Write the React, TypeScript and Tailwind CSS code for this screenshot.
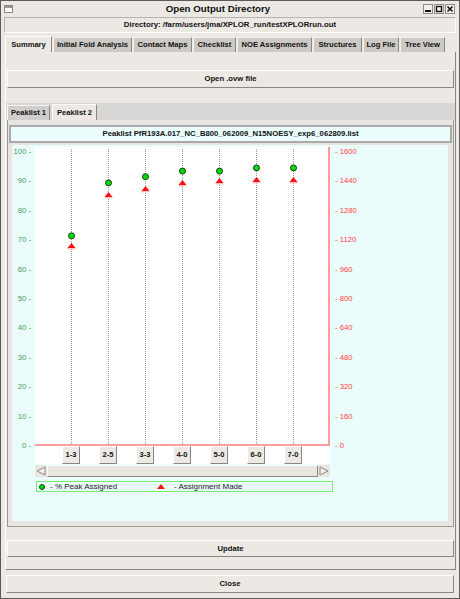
import React from "react";

// one point per peak-assignment round
const rounds = [
  { label: "1-3", pct: 71.5, made: 1088 },
  { label: "2-5", pct: 89.5, made: 1366 },
  { label: "3-3", pct: 91.6, made: 1399 },
  { label: "4-0", pct: 93.5, made: 1431 },
  { label: "5-0", pct: 93.5, made: 1442 },
  { label: "6-0", pct: 94.6, made: 1448 },
  { label: "7-0", pct: 94.6, made: 1448 },
];

const leftTicks = ["100", "90", "80", "70", "60", "50", "40", "30", "20", "10", "0"];
const rightTicks = ["1600", "1440", "1280", "1120", "960", "800", "640", "480", "320", "160", "0"];

const tabs = [
  { name: "Summary", w: "w-[47px]", active: true },
  { name: "Initial Fold Analysis", w: "w-[79px]", active: false },
  { name: "Contact Maps", w: "w-[59px]", active: false },
  { name: "Checklist", w: "w-[43px]", active: false },
  { name: "NOE Assignments", w: "w-[75px]", active: false },
  { name: "Structures", w: "w-[49px]", active: false },
  { name: "Log File", w: "w-[36px]", active: false },
  { name: "Tree View", w: "w-[45px]", active: false },
];

const raised = "border border-t-white border-l-white border-r-[#8a8781] border-b-[#8a8781]";

function Plot() {
  const W = 295;
  const H = 299;
  const step = 37;
  const x0 = 36;
  const yPct = (v: number) => 299 - v * 2.94;
  const yMade = (v: number) => 299 - (v / 1600) * 294;

  return (
    <svg width={W} height={H} className="block bg-white">
      {rounds.map((r, i) => (
        <line
          key={r.label}
          x1={x0 + i * step + 0.5}
          x2={x0 + i * step + 0.5}
          y1={2}
          y2={297}
          stroke="#9a9a9a"
          strokeWidth={1}
          strokeDasharray="1 1"
        />
      ))}
      <line x1={0} x2={W} y1={298} y2={298} stroke="#ff8080" strokeWidth={1.5} />
      <line x1={294} x2={294} y1={0} y2={H} stroke="#ff9a9a" strokeWidth={2} />
      {rounds.map((r, i) => {
        const cx = x0 + i * step + 0.5;
        const ty = yMade(r.made);
        return (
          <g key={r.label + "-m"}>
            <rect x={cx - 4} y={ty + 2} width={8} height={1.5} fill="#ffc0c0" />
            <polygon points={`${cx},${ty - 3} ${cx + 4},${ty + 2} ${cx - 4},${ty + 2}`} fill="#ff1010" />
            <circle cx={cx} cy={yPct(r.pct)} r={3} fill="#00dd00" stroke="#203820" strokeWidth={1} />
          </g>
        );
      })}
    </svg>
  );
}

function ScrollArrow({ dir }: { dir: "left" | "right" }) {
  return (
    <div className="w-[12px] h-[12px] flex items-center justify-center bg-[#e9e6e0]">
      <svg width="10" height="10">
        {dir === "left" ? (
          <polygon points="9,1 9,9 1,5" fill="#f4f2ee" stroke="#8c8984" strokeWidth="1" />
        ) : (
          <polygon points="1,1 1,9 9,5" fill="#f4f2ee" stroke="#8c8984" strokeWidth="1" />
        )}
      </svg>
    </div>
  );
}

function Chart() {
  return (
    <div className="flex pt-[2px]">
      <div className="w-[23px] h-[304px] flex flex-col justify-between items-end pr-[4px] text-[#3f9f55]">
        {leftTicks.map((t) => (
          <span key={t} className="h-[10px] leading-[10px] text-[7.7px] whitespace-pre">
            {t + " -"}
          </span>
        ))}
      </div>
      <div className="w-[295px] flex flex-col">
        <Plot />
        <div className="h-[18px] bg-white flex pl-[27px] gap-[19px]">
          {rounds.map((r) => (
            <button
              key={r.label}
              className={`w-[18px] h-[18px] bg-[#ece9e4] ${raised} flex items-center justify-center font-bold text-[7.5px] text-[#111]`}
            >
              {r.label}
            </button>
          ))}
        </div>
        <div className="mt-[1px] h-[12px] flex bg-[#e6e3dd]">
          <ScrollArrow dir="left" />
          <div className={`flex-1 bg-[#e9e6e0] ${raised}`} />
          <ScrollArrow dir="right" />
        </div>
        <div className="mt-[4px] ml-[1px] w-[297px] h-[11px] border border-[#74ec74] flex items-center text-[8px] text-[#222]">
          <div className="w-[120px] flex items-center">
            <span className="ml-[2px] w-[6px] h-[6px] rounded-full bg-[#00dd00] border border-[#203820]" />
            <span className="ml-[5px] leading-none">- % Peak Assigned</span>
          </div>
          <svg width="8" height="6" className="block">
            <polygon points="4,0 8,5 0,5" fill="#ff1010" />
          </svg>
          <span className="ml-[9px] leading-none">- Assignment Made</span>
        </div>
      </div>
      <div className="h-[304px] flex flex-col justify-between pl-[5px] text-[#ff4242]">
        {rightTicks.map((t) => (
          <span key={t} className="h-[10px] leading-[10px] text-[7.7px] whitespace-pre">
            {"- " + t}
          </span>
        ))}
      </div>
    </div>
  );
}

function WinButton({ kind }: { kind: "min" | "max" | "close" }) {
  return (
    <div className="w-[10px] h-[10px] border border-[#8f8c87] bg-[#f2f0ec] flex items-center justify-center">
      <svg width="8" height="8">
        {kind === "min" && <rect x="1" y="5" width="6" height="2" fill="#111" />}
        {kind === "max" && <rect x="1.5" y="1.5" width="5" height="5" fill="none" stroke="#111" strokeWidth="1.4" />}
        {kind === "close" && (
          <path d="M1.5 1.5 L6.5 6.5 M6.5 1.5 L1.5 6.5" stroke="#111" strokeWidth="1.6" />
        )}
      </svg>
    </div>
  );
}

export default function App() {
  return (
    <div className="w-[460px] h-[599px] bg-[#ece9e4] border border-[#5d5b58] flex flex-col overflow-hidden font-['Liberation_Sans',Arial,sans-serif] text-[#111]">
      {/* title bar */}
      <div className="h-[15px] flex items-center">
        <div className="ml-[3px] w-[9px] h-[8px] border border-[#8b8884] bg-white">
          <div className="h-[2px] bg-[#9c9994]" />
        </div>
        <div className="flex-1 text-center font-bold text-[9.7px] leading-none">Open Output Directory</div>
        <div className="flex gap-[1px] mr-[4px]">
          <WinButton kind="min" />
          <WinButton kind="max" />
          <WinButton kind="close" />
        </div>
      </div>

      {/* directory */}
      <div className="mt-[1px] mx-[3px] h-[16px] border border-[#b7b4ae] border-b-[#ffffff] border-r-[#ffffff] flex items-center justify-center font-bold text-[7.8px]">
        Directory: /farm/users/jma/XPLOR_run/testXPLORrun.out
      </div>

      {/* tabs */}
      <div className="mt-[3px] h-[16px] flex items-end pl-[4px] gap-[1px]">
        {tabs.map((t) =>
          t.active ? (
            <div
              key={t.name}
              className={`${t.w} h-[16px] bg-[#ece9e4] border-t border-l border-r border-t-white border-l-white border-r-[#8a8781] flex items-center justify-center font-bold text-[7.6px]`}
            >
              {t.name}
            </div>
          ) : (
            <div
              key={t.name}
              className={`${t.w} h-[15px] bg-[#cdcac5] border-t border-l border-r border-t-[#f4f2ee] border-l-[#f4f2ee] border-r-[#8a8781] flex items-center justify-center font-bold text-[7.6px]`}
            >
              {t.name}
            </div>
          )
        )}
      </div>

      {/* tab panel */}
      <div className={`ml-[4px] mr-[3px] h-[518px] flex flex-col ${raised} border-t-0`}>
        <button className={`mt-[18px] ml-[1px] mr-[1px] h-[18px] bg-[#ece9e4] ${raised} font-bold text-[7.7px]`}>
          Open .ovw file
        </button>

        {/* sub tabs */}
        <div className="mt-[15px] h-[17px] bg-[#d8d7d5] flex items-end pl-[1px] gap-[2px]">
          <div className="w-[43px] h-[15px] bg-[#cfcecc] border-t border-l border-r border-t-[#f7f6f4] border-l-[#f7f6f4] border-r-[#8a8781] flex items-center justify-center font-bold text-[7.6px]">
            Peaklist 1
          </div>
          <div className="w-[45px] h-[16px] bg-[#ece9e4] border-t border-l border-r border-t-white border-l-white border-r-[#8a8781] flex items-center justify-center font-bold text-[7.6px]">
            Peaklist 2
          </div>
        </div>

        <div className="h-[407px] ml-[1px] mr-[1px] bg-[#e7e5e1] border border-[#9c9994] border-t-0 flex flex-col">
          <div className="mt-[5px] mx-[1px] h-[18px] border-[2px] border-[#a9a9a9] bg-[#eafcfc] flex items-center justify-center font-bold text-[7.7px]">
            Peaklist PfR193A.017_NC_B800_062009_N15NOESY_exp6_062809.list
          </div>
          <div className="mt-[2px] ml-[4px] mr-[5px] h-[376px] bg-[#eafcfc]">
            <Chart />
          </div>
        </div>

        <button className={`mt-[13px] ml-[1px] mr-[1px] h-[17px] bg-[#ece9e4] ${raised} font-bold text-[7.7px]`}>
          Update
        </button>
      </div>

      <button className={`mt-[5px] mx-[5px] h-[18px] bg-[#ece9e4] ${raised} font-bold text-[7.7px]`}>
        Close
      </button>
    </div>
  );
}
